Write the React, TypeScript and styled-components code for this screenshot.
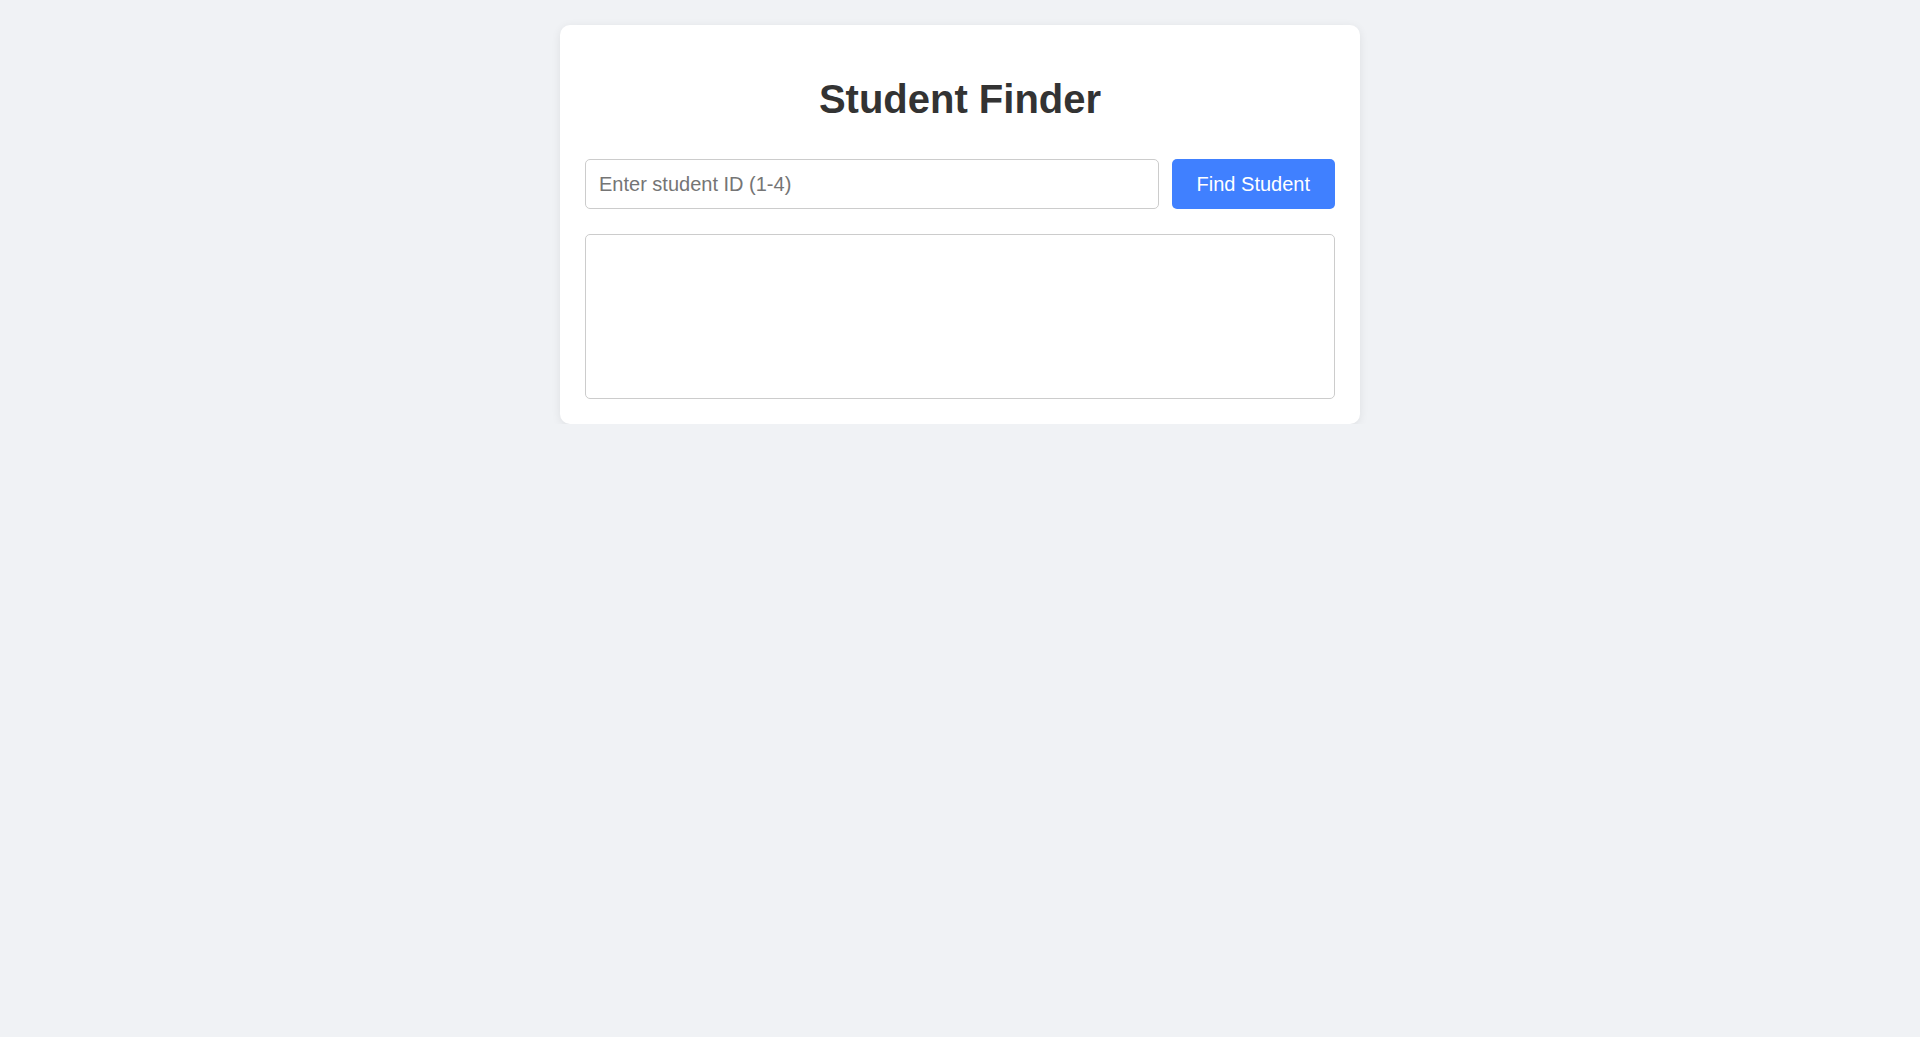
import React from "react";
import styled, { createGlobalStyle } from "styled-components";

const Global = createGlobalStyle`
  html, body { margin: 0; padding: 0; background: #f0f2f5; }
  body { font-family: "Liberation Sans", Arial, sans-serif; }
`;

const Page = styled.div`
  padding-top: 25px;
  display: flex;
  justify-content: center;
`;

const Card = styled.div`
  width: 800px;
  box-sizing: border-box;
  background: #ffffff;
  border-radius: 10px;
  padding: 25px;
  box-shadow: 0 2px 10px rgba(0, 0, 0, 0.08);
  display: flex;
  flex-direction: column;
`;

const Title = styled.h1`
  margin: 26px 0 37px;
  font-size: 40px;
  line-height: 46px;
  font-weight: 700;
  color: #333333;
  text-align: center;
`;

const SearchRow = styled.div`
  display: flex;
  gap: 13px;
  margin-bottom: 25px;
`;

const Input = styled.input`
  flex: 1;
  box-sizing: border-box;
  height: 50px;
  padding: 0 13px;
  font-size: 20px;
  font-family: "Liberation Sans", Arial, sans-serif;
  border: 1px solid #cccccc;
  border-radius: 5px;
  color: #333;
  outline: none;
  &::placeholder { color: #757575; }
`;

const Button = styled.button`
  box-sizing: border-box;
  height: 50px;
  padding: 0 25px;
  font-size: 20px;
  font-family: "Liberation Sans", Arial, sans-serif;
  background: #4080ff;
  color: #ffffff;
  border: none;
  border-radius: 5px;
  cursor: pointer;
`;

const Result = styled.div`
  box-sizing: border-box;
  min-height: 165px;
  border: 1px solid #cccccc;
  border-radius: 5px;
  padding: 19px;
`;

export default function App() {
  return (
    <>
      <Global />
      <Page>
        <Card>
          <Title>Student Finder</Title>
          <SearchRow>
            <Input placeholder="Enter student ID (1-4)" />
            <Button>Find Student</Button>
          </SearchRow>
          <Result />
        </Card>
      </Page>
    </>
  );
}
